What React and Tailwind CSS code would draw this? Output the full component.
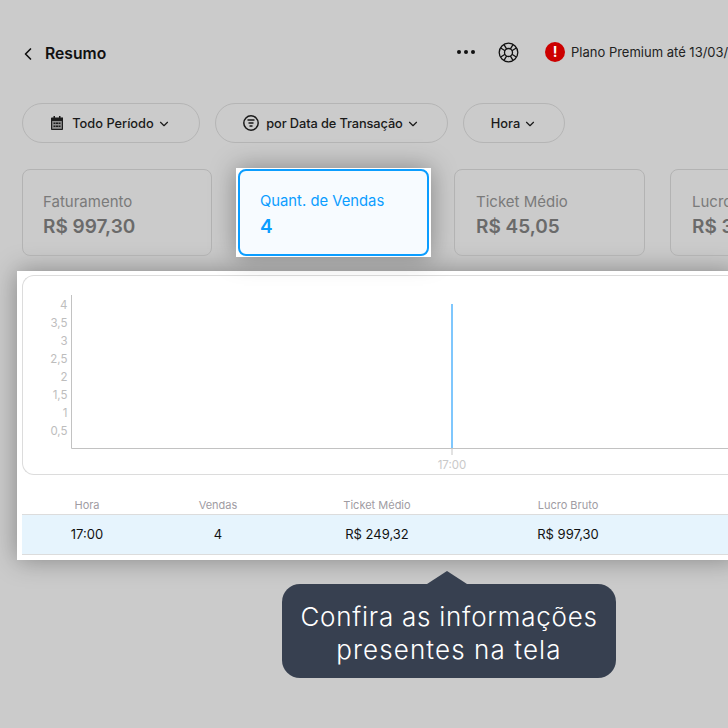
import { ChevronDown, ChevronLeft } from "lucide-react";

const font = { fontFamily: "Inter, sans-serif" };

function CalendarIcon() {
  return (
    <svg width="12" height="14" viewBox="0 0 12 14" className="shrink-0">
      <path d="M2.500 0h1.500v1.500h4V0h1.500v1.500h1.200A0.800 0.800 0 0 1 12 2.300v10.900a0.800 0.800 0 0 1-0.800 0.800H0.800A0.800 0.800 0 0 1 0 13.200V2.300A0.800 0.800 0 0 1 0.800 1.500h1.700z" fill="#1c1c1c" />
      <rect x="1.200" y="5" width="9.600" height="7.800" fill="#8f8f8f" />
      <path d="M2.500 6.500h2v1.500h-2zM5 6.500h2v1.500H5zM7.500 6.500h2v1.500h-2zM2.500 9.500h2V11h-2zM5 9.500h2V11H5zM7.500 9.500h2V11h-2z" fill="#1c1c1c" />
    </svg>
  );
}

function FilterIcon() {
  return (
    <svg width="16" height="16" viewBox="0 0 16 16" fill="none" stroke="#1a1a1a" className="shrink-0">
      <circle cx="8" cy="8" r="7.200" strokeWidth="1.500" />
      <path d="M4.500 5h7M5.500 8h5M6.500 11h3" strokeWidth="1.500" />
    </svg>
  );
}

function LifeBuoy() {
  return (
    <svg width="21" height="21" viewBox="0 0 21 21" fill="none" stroke="#111" strokeWidth="1.300">
      <circle cx="10.500" cy="10.500" r="9.300" />
      <circle cx="10.500" cy="10.500" r="4" />
      <path d="M6 2.700l2.700 4.400M2.700 6l4.400 2.700M15 2.700l-2.700 4.400M18.300 6l-4.400 2.700M6 18.300l2.700-4.400M2.700 15l4.400-2.700M15 18.300l-2.700-4.400M18.300 15l-4.400-2.700" />
    </svg>
  );
}

function Pill({ width, icon, label, tight }) {
  return (
    <button className={`h-10 rounded-full border border-[#b5b5b5] flex items-center justify-center shrink-0 ${tight ? "gap-[7px]" : "gap-[9px]"} ${width}`}>
      {icon}
      <span className={`flex items-center gap-[3px] pt-px text-[12.8px] font-medium text-[#1a1a1a] ${tight ? "tracking-[-0.1px]" : ""}`}>
        {label}
        <ChevronDown size={14} strokeWidth={2} color="#1a1a1a" />
      </span>
    </button>
  );
}

function Card({ label, value, first }) {
  return (
    <div className={`h-[87px] shrink-0 rounded-lg border border-[#b3b3b3] pt-[20px] ${first ? "w-[190px] mr-px pl-[20px]" : "w-[191px] pl-[21px]"}`}>
      <div className="text-[15px] leading-[23px] text-[#7a7a7a] whitespace-nowrap">{label}</div>
      <div className="text-[19px] leading-[28px] font-semibold text-[#6a6a6a] whitespace-nowrap">{value}</div>
    </div>
  );
}

function Chart() {
  const ticks = ["4", "3,5", "3", "2,5", "2", "1,5", "1", "0,5"];
  return (
    <svg width="706" height="198" className="block" style={font}>
      <path d="M48.500 19V172.500H706" fill="none" stroke="#c2c2c2" />
      {ticks.map((t, i) => (
        <text key={t} x="44.500" y={33 + i * 18} textAnchor="end" fontSize="11.500" fill="#bdbdbd">{t}</text>
      ))}
      <rect x="428" y="28" width="2" height="144" fill="#7fc7fd" />
      <rect x="428" y="173" width="2" height="6" fill="#e2e2e2" />
      <text x="429" y="193" textAnchor="middle" fontSize="11.500" fill="#c9c9c9">17:00</text>
    </svg>
  );
}

export default function App() {
  return (
    <div className="relative w-[728px] h-[728px] overflow-hidden bg-[#cbcbcb]" style={font}>
      <header className="h-[103px] pl-[22px] pt-[36px] flex items-start">
        <div className="flex items-center h-[34px] w-[435px] shrink-0 pt-px -ml-[4px]">
          <ChevronLeft size={20} strokeWidth={2} color="#111" />
          <span className="ml-[7px] text-[15.7px] font-semibold text-[#111]">Resumo</span>
        </div>
        <div className="flex items-center h-[32px] shrink-0 whitespace-nowrap ml-[4px]">
          <span className="flex gap-[3px] w-[18px]">
            <i className="w-1 h-1 rounded-full bg-[#111]" />
            <i className="w-1 h-1 rounded-full bg-[#111]" />
            <i className="w-1 h-1 rounded-full bg-[#111]" />
          </span>
          <span className="ml-[23px] mt-px"><LifeBuoy /></span>
          <span className="ml-[26px] w-5 h-5 rounded-full bg-[#cc0000] text-white text-sm font-bold flex items-center justify-center">!</span>
          <span className="ml-[6px] mt-[2px] text-[13px] text-[#222]">Plano Premium até 13/03/2025</span>
        </div>
      </header>

      <div className="pl-[22px] flex gap-[15px]">
        <Pill width="w-[178px]" icon={<CalendarIcon />} label="Todo Período" />
        <Pill width="w-[233px]" icon={<FilterIcon />} label="por Data de Transação" tight />
        <Pill width="w-[102px]" label="Hora" />
      </div>

      <div className="mt-[25px] pl-[22px] flex items-center gap-[25px]">
        <Card label="Faturamento" value="R$ 997,30" first />
        <div className="-mx-[2px] shrink-0 px-[2px] py-px bg-white shadow-[0_0_24px_rgba(0,0,0,0.35)]">
          <div className="w-[191px] h-[87px] rounded-lg border-2 border-[#0b9dff] bg-[#f7fbff] pl-[20px] pt-[19px]">
            <div className="text-[14.8px] leading-[23px] text-[#0b9dff] whitespace-nowrap">Quant. de Vendas</div>
            <div className="text-[19px] leading-[28px] font-semibold text-[#0b9dff]">4</div>
          </div>
        </div>
        <Card label="Ticket Médio" value="R$ 45,05" />
        <Card label="Lucro Bruto" value="R$ 352,10" />
      </div>

      <section className="mt-[14px] ml-[17px] w-[720px] h-[289px] bg-white pl-[5px] pt-[4px] shadow-[0_0_24px_rgba(0,0,0,0.35)]">
        <div className="h-[200px] rounded-l-xl border border-[#dcdcdc] border-r-0">
          <Chart />
        </div>
        <div className="grid grid-cols-[130px_132px_186px_196px] h-[39px] items-end pb-px text-[11px] text-[#a09ca3] text-center">
          <div>Hora</div>
          <div>Vendas</div>
          <div>Ticket Médio</div>
          <div>Lucro Bruto</div>
        </div>
        <div className="grid grid-cols-[130px_132px_186px_196px] h-[41px] items-center border-y border-[#dcdcdc] bg-[#e6f4fd] text-[13px] text-[#111] text-center">
          <div>17:00</div>
          <div>4</div>
          <div>R$ 249,32</div>
          <div>R$ 997,30</div>
        </div>
      </section>

      <div className="absolute left-[282px] top-[584px] w-[334px] h-[94px] pt-[3px] rounded-[18px] bg-[#374050] flex items-center justify-center text-center text-[26px] leading-[33px] font-light tracking-[0.75px] text-white">
        <span className="absolute left-[145px] -top-[13px] w-0 h-0 border-x-[20px] border-x-transparent border-b-[13px] border-b-[#374050]" />
        <p>Confira as informações<br /><span className="tracking-[1.1px]">presentes na tela</span></p>
      </div>
    </div>
  );
}
